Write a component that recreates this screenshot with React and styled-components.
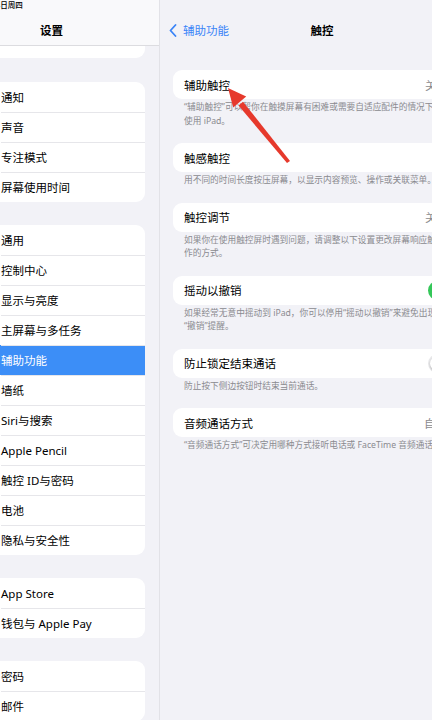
import React from "react";
import styled, { createGlobalStyle } from "styled-components";

const GlobalStyle = createGlobalStyle`
  html, body {
    margin: 0;
    padding: 0;
    background: #f2f2f7;
  }
  body {
    font-family: "Noto Sans", "Noto Sans CJK SC", "Liberation Sans", sans-serif;
    color: #000;
  }
  * { box-sizing: border-box; }
`;

const Screen = styled.div`
  position: relative;
  display: flex;
  width: 432px;
  height: 720px;
  overflow: hidden;
  background: #f2f2f7;
`;

/* ---------- sidebar ---------- */

const Sidebar = styled.aside`
  flex: 0 0 216px;
  margin-left: -56px;
  border-right: 1px solid #e2e2e7;
  background: #f2f2f7;
`;

const SidebarHeader = styled.header`
  height: 46px;
  display: grid;
  grid-template-rows: 14px 1fr;
  background: #f9f9fb;
  border-bottom: 1px solid #dcdce0;
`;

const StatusText = styled.div`
  padding: 1px 0 0 36px;
  font-size: 7.5px;
  line-height: 9px;
  font-weight: 500;
`;

const SidebarTitle = styled.h1`
  margin: 0;
  display: flex;
  align-items: center;
  justify-content: center;
  font-size: 11.5px;
  font-weight: 600;
`;

const CardStub = styled.div`
  height: 12px;
  margin: 0 14px;
  background: #fff;
  border-radius: 0 0 9px 9px;
`;

const Group = styled.div`
  margin: ${({ $first }) => ($first ? "24px" : "23px")} 14px 0;
  background: #fff;
  border-radius: 9px;
  overflow: hidden;
`;

const NavRow = styled.div`
  position: relative;
  height: 30px;
  display: flex;
  align-items: center;
  padding-left: 43px;
  font-size: 11.5px;
  white-space: nowrap;
  color: ${({ $selected }) => ($selected ? "#fff" : "#000")};
  background: ${({ $selected }) => ($selected ? "#3c8ef7" : "transparent")};

  &:not(:first-child)::before {
    content: "";
    position: absolute;
    top: 0;
    left: 43px;
    right: 0;
    height: 1px;
    background: #e6e6ea;
  }
`;

/* ---------- detail ---------- */

const Detail = styled.main`
  flex: 0 0 324px;
`;

const NavBar = styled.div`
  height: 52px;
  padding: 8px 9px 0;
  display: grid;
  grid-template-columns: 1fr auto 1fr;
  align-items: center;
`;

const BackButton = styled.div`
  display: flex;
  align-items: center;
  gap: 6px;
  font-size: 11.5px;
  color: #3a84f7;
`;

const NavTitle = styled.div`
  font-size: 11.5px;
  font-weight: 600;
`;

const Content = styled.div`
  padding: 18px 13px 0;
`;

const Card = styled.div`
  height: 29px;
  display: flex;
  align-items: center;
  justify-content: space-between;
  padding: 0 12px 0 11px;
  background: #fff;
  border-radius: 9px;
  font-size: 11.5px;
  white-space: nowrap;
`;

const Accessory = styled.div`
  display: flex;
  align-items: center;
  gap: 6px;
  color: #8a8a8e;
`;

const Value = styled.span`
  min-width: 22px;
  text-align: left;
`;

const Footnote = styled.div`
  padding: 2px 11px 15px;
  font-size: 8.7px;
  line-height: 13.5px;
  color: #8a8a8f;
  white-space: nowrap;
`;

const Toggle = styled.span`
  position: relative;
  display: block;
  width: 31px;
  height: 19px;
  border-radius: 10px;
  background: ${({ $on }) => ($on ? "#34c759" : "#e9e9eb")};

  &::after {
    content: "";
    position: absolute;
    top: 2px;
    left: ${({ $on }) => ($on ? "14px" : "2px")};
    width: 15px;
    height: 15px;
    border-radius: 50%;
    background: #fff;
    box-shadow: 0 1px 2px rgba(0, 0, 0, 0.25);
  }
`;

const Overlay = styled.svg`
  position: absolute;
  top: 0;
  left: 0;
  pointer-events: none;
`;

const BackChevron = () => (
  <svg width="8" height="13" viewBox="0 0 8 13">
    <path d="M6.5 1 L1.5 6.5 L6.5 12" fill="none" stroke="#3a84f7" strokeWidth="1.8" strokeLinecap="round" strokeLinejoin="round" />
  </svg>
);

const RowChevron = () => (
  <svg width="6" height="10" viewBox="0 0 6 10">
    <path d="M1 1 L5 5 L1 9" fill="none" stroke="#c4c4c8" strokeWidth="1.4" strokeLinecap="round" strokeLinejoin="round" />
  </svg>
);

const groups = [
  ["通知", "声音", "专注模式", "屏幕使用时间"],
  ["通用", "控制中心", "显示与亮度", "主屏幕与多任务", "辅助功能", "墙纸", "Siri与搜索", "Apple Pencil", "触控 ID与密码", "电池", "隐私与安全性"],
  ["App Store", "钱包与 Apple Pay"],
  ["密码", "邮件"],
];

const settings = [
  {
    title: "辅助触控",
    value: "关",
    note: ["“辅助触控”可以帮你在触摸屏幕有困难或需要自适应配件的情况下", "使用 iPad。"],
  },
  {
    title: "触感触控",
    note: ["用不同的时间长度按压屏幕，以显示内容预览、操作或关联菜单。"],
  },
  {
    title: "触控调节",
    value: "关",
    note: ["如果你在使用触控屏时遇到问题，请调整以下设置更改屏幕响应触控操", "作的方式。"],
  },
  {
    title: "摇动以撤销",
    toggle: true,
    on: true,
    note: ["如果经常无意中摇动到 iPad，你可以停用“摇动以撤销”来避免出现", "“撤销”提醒。"],
  },
  {
    title: "防止锁定结束通话",
    toggle: true,
    on: false,
    note: ["防止按下侧边按钮时结束当前通话。"],
  },
  {
    title: "音频通话方式",
    value: "自动",
    note: ["“音频通话方式”可决定用哪种方式接听电话或 FaceTime 音频通话。"],
  },
];

function Arrow() {
  return (
    <Overlay width="432" height="720" viewBox="0 0 432 720">
      <polygon points="290,161 287,163 238.5,105.5 243,101.7" fill="#e6392c" />
      <polygon points="228,88 233.2,107.5 246.2,96.5" fill="#e6392c" />
    </Overlay>
  );
}

export default function App() {
  return (
    <Screen>
      <GlobalStyle />
      <Sidebar>
        <SidebarHeader>
          <StatusText>4月13日周四</StatusText>
          <SidebarTitle>设置</SidebarTitle>
        </SidebarHeader>
        <CardStub />
        {groups.map((items, gi) => (
          <Group key={gi} $first={gi === 0}>
            {items.map((label) => (
              <NavRow key={label} $selected={label === "辅助功能"}>
                {label}
              </NavRow>
            ))}
          </Group>
        ))}
      </Sidebar>

      <Detail>
        <NavBar>
          <BackButton>
            <BackChevron />
            辅助功能
          </BackButton>
          <NavTitle>触控</NavTitle>
          <div />
        </NavBar>
        <Content>
          {settings.map((s) => (
            <div key={s.title}>
              <Card>
                <span>{s.title}</span>
                <Accessory>
                  {s.value && <Value>{s.value}</Value>}
                  {s.toggle ? <Toggle $on={s.on} /> : <RowChevron />}
                </Accessory>
              </Card>
              <Footnote>
                {s.note.map((line) => (
                  <div key={line}>{line}</div>
                ))}
              </Footnote>
            </div>
          ))}
        </Content>
      </Detail>

      <Arrow />
    </Screen>
  );
}
